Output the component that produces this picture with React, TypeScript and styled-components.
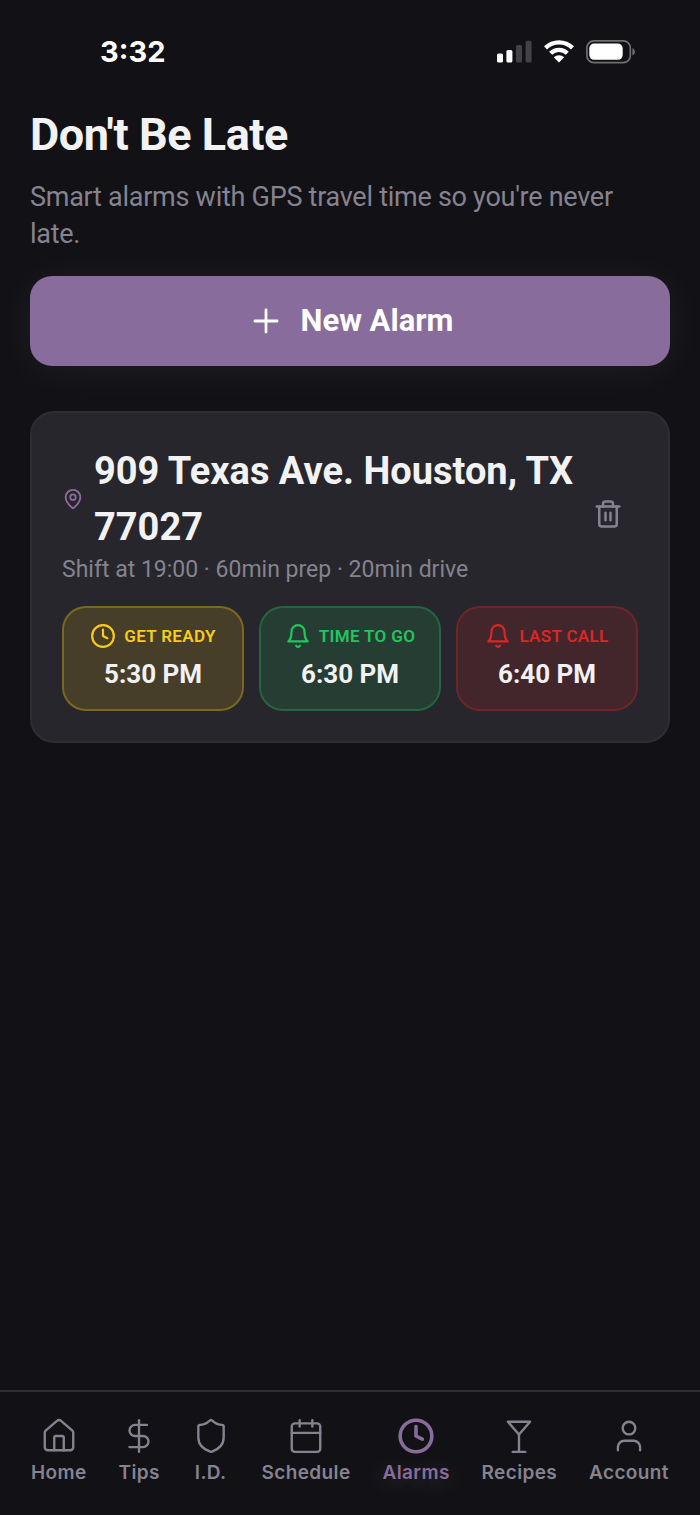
import React from "react";
import styled, { createGlobalStyle } from "styled-components";
import {
  Calendar,
  Clock,
  DollarSign,
  House,
  LucideIcon,
  MapPin,
  Martini,
  Plus,
  Shield,
  Trash2,
  User,
} from "lucide-react";

const color = {
  page: "#121116",
  card: "#27262c",
  line: "#2e2d33",
  text: "#f2f2f3",
  muted: "#85838f",
  accent: "#886c9c",
};

const GlobalStyle = createGlobalStyle`
  *, *::before, *::after { box-sizing: border-box; }
  body {
    margin: 0;
    background: ${color.page};
    color: ${color.text};
    font-family: Roboto, "Liberation Sans", sans-serif;
  }
  h1, h2, p, ul { margin: 0; padding: 0; }
  button { font: inherit; border: 0; cursor: pointer; }
`;

const Screen = styled.div`
  min-height: 100vh;
  display: flex;
  flex-direction: column;
`;

const StatusBar = styled.header`
  display: flex;
  justify-content: space-between;
  align-items: center;
  padding: 34px 64px 0 100px;
`;

const StatusTime = styled.span`
  font: 700 29px/36px Inter, sans-serif;
  color: #fff;
`;

const StatusIcons = styled.div`
  display: flex;
  align-items: center;
  gap: 12px;
`;

const Main = styled.main`
  flex: 1;
  padding: 38px 30px 40px;
`;

const Title = styled.h1`
  font-size: 45px;
  line-height: 54px;
  font-weight: 700;
  letter-spacing: -0.01em;
`;

const Subtitle = styled.p`
  margin-top: 17px;
  padding-right: 30px;
  font-size: 27px;
  line-height: 37px;
  letter-spacing: -0.01em;
  color: ${color.muted};
`;

const NewAlarmButton = styled.button`
  display: flex;
  align-items: center;
  justify-content: center;
  gap: 16px;
  width: 100%;
  height: 90px;
  margin-top: 23px;
  padding-bottom: 2px;
  border-radius: 22px;
  background: ${color.accent};
  color: #fff;
  font-size: 31px;
  font-weight: 700;
  box-shadow: 0 4px 44px rgba(255, 255, 255, 0.06);
`;

const Card = styled.article`
  margin-top: 45px;
  padding: 30px;
  border: 2px solid ${color.line};
  border-radius: 24px;
  background: ${color.card};
`;

const CardTop = styled.div`
  display: flex;
  align-items: center;
`;

const CardInfo = styled.div`
  flex: 1;
  min-width: 0;
`;

const AddressRow = styled.div`
  display: flex;
  align-items: center;
  gap: 10px;
  svg { flex: none; color: ${color.accent}; }
`;

const Address = styled.h2`
  font-size: 38px;
  line-height: 56px;
  font-weight: 700;
`;

const Details = styled.p`
  font-size: 23px;
  line-height: 29px;
  color: ${color.muted};
`;

const DeleteButton = styled.button`
  display: flex;
  padding: 15px;
  background: none;
  color: ${color.muted};
`;

const Stages = styled.ul`
  display: grid;
  grid-template-columns: repeat(3, 1fr);
  gap: 15px;
  margin-top: 22px;
  list-style: none;
`;

const Stage = styled.li<{ $rgb: string }>`
  display: flex;
  flex-direction: column;
  align-items: center;
  gap: 6px;
  padding: 14px 0 17px;
  border: 2px solid rgba(${(p) => p.$rgb}, 0.4);
  border-radius: 24px;
  background: rgba(${(p) => p.$rgb}, 0.15);
  background-clip: padding-box;
`;

const StageLabel = styled.span<{ $rgb: string }>`
  display: flex;
  align-items: center;
  gap: 8px;
  height: 28px;
  font-size: 17px;
  font-weight: 600;
  letter-spacing: 0.02em;
  text-transform: uppercase;
  white-space: nowrap;
  color: rgb(${(p) => p.$rgb});
`;

const StageTime = styled.time`
  font-size: 26px;
  line-height: 36px;
  font-weight: 700;
`;

const TabBar = styled.nav`
  display: flex;
  justify-content: space-between;
  padding: 25px 31px 30px;
  border-top: 2px solid ${color.line};
`;

const Tab = styled.a<{ $active?: boolean }>`
  display: flex;
  flex-direction: column;
  align-items: center;
  gap: 6px;
  color: ${(p) => (p.$active ? color.accent : color.muted)};
  text-decoration: none;
`;

const TabLabel = styled.span<{ $active?: boolean }>`
  font-family: Inter, sans-serif;
  font-size: 19px;
  line-height: 24px;
  font-weight: 600;
  letter-spacing: 0.02em;
  text-shadow: ${(p) => (p.$active ? "0 4px 24px rgba(255, 255, 255, 0.25)" : "none")};
`;

const SignalIcon = () => (
  <svg width="35" height="24" viewBox="0 0 35 24" aria-hidden="true">
    <rect x="0" y="13.5" width="6" height="9" rx="1.6" fill="#fff" />
    <rect x="9.4" y="10" width="6" height="12.5" rx="1.6" fill="#fff" />
    <rect x="19" y="5" width="6" height="17.5" rx="1.6" fill="#434246" />
    <rect x="28.6" y="0.8" width="6" height="21.7" rx="1.6" fill="#434246" />
  </svg>
);

const WifiIcon = () => (
  <svg width="30" height="24" viewBox="0 0 30 24" aria-hidden="true">
    <g fill="none" stroke="#fff" strokeWidth="4.4">
      <path d="M1.5 7.8a19.4 19.4 0 0 1 27 0" />
      <path d="M6.7 13.3a11.8 11.8 0 0 1 16.6 0" />
    </g>
    <path d="M15 22.6l-5.2-5.3a7.4 7.4 0 0 1 10.4 0z" fill="#fff" />
  </svg>
);

const BatteryIcon = () => (
  <svg width="50" height="24" viewBox="0 0 50 24" aria-hidden="true">
    <rect x="0.9" y="0.9" width="43.4" height="21.8" rx="7" fill="none" stroke="#6f6e73" strokeWidth="1.7" />
    <rect x="3.3" y="3.6" width="33.4" height="16.2" rx="4.8" fill="#fff" />
    <path d="M46.4 8.2c3.4 1.2 3.4 6 0 7.2z" fill="#6f6e73" />
  </svg>
);

const BellIcon = () => (
  <svg
    width="26"
    height="26"
    viewBox="0 0 24 24"
    fill="none"
    stroke="currentColor"
    strokeWidth="2"
    strokeLinecap="round"
    strokeLinejoin="round"
    aria-hidden="true"
  >
    <path d="M6 8a6 6 0 0 1 12 0c0 7 3 9 3 9H3s3-2 3-9" />
    <path d="M10.3 21a1.94 1.94 0 0 0 3.4 0" />
  </svg>
);

const stages = [
  { label: "Get Ready", time: "5:30 PM", value: "17:30", rgb: "250, 204, 21", icon: <Clock size={26} /> },
  { label: "Time to Go", time: "6:30 PM", value: "18:30", rgb: "34, 197, 94", icon: <BellIcon /> },
  { label: "Last Call", time: "6:40 PM", value: "18:40", rgb: "220, 38, 38", icon: <BellIcon /> },
];

const tabs: { label: string; Icon: LucideIcon; active?: boolean }[] = [
  { label: "Home", Icon: House },
  { label: "Tips", Icon: DollarSign },
  { label: "I.D.", Icon: Shield },
  { label: "Schedule", Icon: Calendar },
  { label: "Alarms", Icon: Clock, active: true },
  { label: "Recipes", Icon: Martini },
  { label: "Account", Icon: User },
];

export default function App() {
  return (
    <Screen>
      <GlobalStyle />
      <StatusBar>
        <StatusTime>3:32</StatusTime>
        <StatusIcons>
          <SignalIcon />
          <WifiIcon />
          <BatteryIcon />
        </StatusIcons>
      </StatusBar>
      <Main>
        <Title>Don't Be Late</Title>
        <Subtitle>Smart alarms with GPS travel time so you're never late.</Subtitle>
        <NewAlarmButton type="button">
          <Plus size={38} strokeWidth={1.75} />
          New Alarm
        </NewAlarmButton>
        <Card>
          <CardTop>
            <CardInfo>
              <AddressRow>
                <MapPin size={22} />
                <Address>909 Texas Ave. Houston, TX 77027</Address>
              </AddressRow>
              <Details>Shift at 19:00 · 60min prep · 20min drive</Details>
            </CardInfo>
            <DeleteButton type="button" aria-label="Delete alarm">
              <Trash2 size={30} strokeWidth={2} />
            </DeleteButton>
          </CardTop>
          <Stages>
            {stages.map((s) => (
              <Stage key={s.label} $rgb={s.rgb}>
                <StageLabel $rgb={s.rgb}>
                  {s.icon}
                  {s.label}
                </StageLabel>
                <StageTime dateTime={s.value}>{s.time}</StageTime>
              </Stage>
            ))}
          </Stages>
        </Card>
      </Main>
      <TabBar>
        {tabs.map(({ label, Icon, active }) => (
          <Tab key={label} href="#" $active={active} aria-current={active ? "page" : undefined}>
            <Icon size={38} strokeWidth={active ? 2.25 : 1.5} />
            <TabLabel $active={active}>{label}</TabLabel>
          </Tab>
        ))}
      </TabBar>
    </Screen>
  );
}
